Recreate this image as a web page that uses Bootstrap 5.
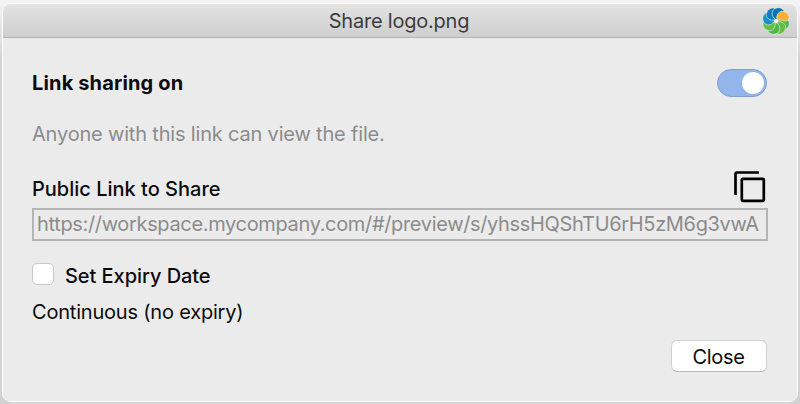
<!DOCTYPE html>
<html lang="en">
<head>
<meta charset="utf-8">
<meta name="viewport" content="width=device-width, initial-scale=1">
<title>Share logo.png</title>
<link href="https://cdn.jsdelivr.net/npm/bootstrap@5.3.0/dist/css/bootstrap.min.css" rel="stylesheet">
<style>
body{font-family:Inter,"Liberation Sans",sans-serif;font-size:20px;line-height:24px;color:#0b0b0b;height:404px;padding:3px 2px 2px;background:linear-gradient(#f4f4f4 0 3px,#d3d3d3 60px)}
.window{height:399px;border:1px solid #fcfcfc;border-radius:9px;background:#ebebeb;overflow:hidden}
.titlebar{height:34px;background:linear-gradient(#e3e3e3,#cecece);border-bottom:1px solid #b3b3b3;color:#3c3c3c}
.titlebar h1{font-size:20px;line-height:24px;letter-spacing:-.22px;padding:1px 2px 0 0}
.brand{top:2px;right:6px}
.content{padding:31px 30px 0 29px}
.heading{font-weight:700;font-size:20px;letter-spacing:.15px}
.soft{color:#8c8c8c}
.toggle{width:50px;height:28px;border:1px solid #819fce;background:#92b5eb;padding:2px 2px}
.knob{width:22px;height:22px;background:#fff}
.hint{margin-top:25px;letter-spacing:-.18px}
.link-row{margin-top:24px;height:38px}
.link-row label{font-weight:500;padding-top:7px}
.expiry label{font-weight:500;letter-spacing:-.06px;padding:1px 0 0 11px}
.url{height:33px;border:2px solid #b5b5b5;padding:0 3px;letter-spacing:-.34px;line-height:29px;margin-right:-1px}
.expiry{margin-top:22px}
.box{width:22px;height:22px;border-radius:5px;background:#fff;border:1px solid #c9c9c9}
.plain{letter-spacing:-.2px;margin-top:12px}
.close-btn{width:96px;height:32px;border:1px solid #cfcfcf;border-bottom-color:#b9b9b9;border-radius:6px;background:#fff;font-size:20px;line-height:24px;letter-spacing:-.3px;padding:3px 1px 1px 0;margin:16px 0 0 0;color:#0b0b0b}
</style>
</head>
<body class="m-0 overflow-hidden">
<main class="window d-flex flex-column">
  <header class="titlebar position-relative d-flex justify-content-center align-items-center">
    <h1 class="m-0 fw-normal text-nowrap"><span id="title">Share logo.png</span></h1>
    <svg class="brand position-absolute" width="30" height="30" viewBox="-15 -15 30 30" aria-hidden="true">
      <defs><path id="petal" d="M0-1.5C-4-2-7-6-5.5-10C-3-14 2-15 5-12C6-9 4-7 2.5-5.5Q1-4 0-1.5Z"/></defs>
      <g stroke="#e6efea" stroke-width=".6">
        <use href="#petal" fill="#4db748" transform="rotate(105)"/>
        <use href="#petal" fill="#66bd45" transform="rotate(150)"/>
        <use href="#petal" fill="#4db748" transform="rotate(195)"/>
        <use href="#petal" fill="#66bd45" transform="rotate(240)"/>
        <use href="#petal" fill="#1590cb" transform="rotate(285)"/>
        <use href="#petal" fill="#0a7fc1" transform="rotate(330)"/>
        <use href="#petal" fill="#0873b4" transform="rotate(15)"/>
        <use href="#petal" fill="#fbb034" transform="rotate(60)"/>
      </g>
      <circle r="2.1" fill="#fff"/>
    </svg>
  </header>
  <section class="content">
    <div class="d-flex justify-content-between align-items-center">
      <span class="heading">Link sharing on</span>
      <div class="toggle rounded-pill d-flex justify-content-end" role="switch" aria-checked="true"><span class="knob rounded-circle"></span></div>
    </div>
    <div class="hint soft">Anyone with this link can view the file.</div>
    <div class="link-row d-flex justify-content-between">
      <label>Public Link to Share</label>
      <svg width="34" height="34" viewBox="0 0 34 34" fill="none" stroke="#000" stroke-width="2.7" aria-hidden="true"><path d="M2.5 25V4Q2.5 2.5 4 2.5H26"/><rect x="8.8" y="8.8" width="22" height="22" rx="1"/></svg>
    </div>
    <div class="url soft text-nowrap"><span>https://workspace.mycompany.com/#/preview/s/yhssHQShTU6rH5zM6g3vwA</span></div>
    <div class="expiry d-flex"><span class="box"></span><label>Set Expiry Date</label></div>
    <div class="plain">Continuous (no expiry)</div>
    <div class="d-flex justify-content-end"><button type="button" class="btn close-btn">Close</button></div>
  </section>
</main>
<script src="https://cdn.jsdelivr.net/npm/bootstrap@5.3.0/dist/js/bootstrap.bundle.min.js"></script>
</body>
</html>
